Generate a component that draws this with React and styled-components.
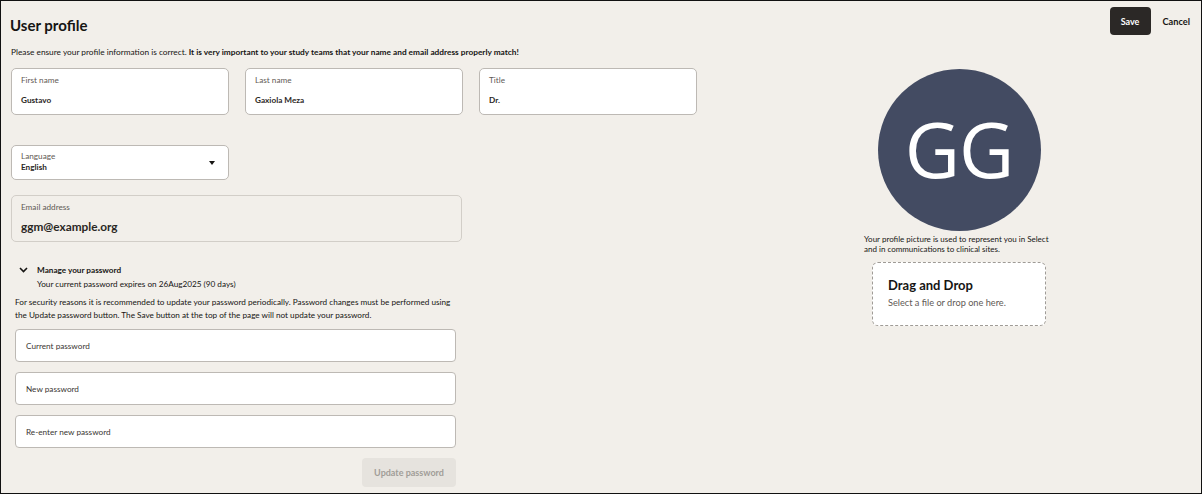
import React from "react";
import styled, { createGlobalStyle } from "styled-components";

const Global = createGlobalStyle`
  * { box-sizing: border-box; }
  html, body { margin: 0; padding: 0; background: #f2efea; }
  body { font-family: Lato, "Noto Sans", sans-serif; color: #161513; }
`;

const Frame = styled.div`
  width: 1202px;
  height: 494px;
  border: 1px solid #111;
  background: #f2efea;
  padding: 6px 11px 0 9px;
  overflow: hidden;
`;

const Header = styled.div`
  display: flex;
  justify-content: space-between;
  align-items: flex-start;
  height: 28px;
`;

const Title = styled.h1`
  margin: 8px 0 0 0;
  font-size: 15px;
  line-height: 20px;
  font-weight: 700;
`;

const Actions = styled.div`
  display: flex;
  align-items: center;
  gap: 12px;
`;

const SaveButton = styled.button`
  height: 28px;
  width: 41px;
  border: none;
  border-radius: 4px;
  background: #2b2826;
  color: #fff;
  font-family: Lato, sans-serif;
  font-weight: 700;
  font-size: 9px;
  padding: 0;
`;

const CancelButton = styled.button`
  border: none;
  background: transparent;
  color: #161513;
  font-family: Lato, sans-serif;
  font-weight: 700;
  font-size: 9.2px;
  padding: 0;
`;

const Notice = styled.p`
  margin: 11px 0 0 1px;
  font-size: 8.3px;
  line-height: 12px;
  b { font-weight: 700; }
`;

const Body = styled.div`
  display: flex;
  margin-top: 10px;
`;

const LeftCol = styled.div`
  width: 687px;
  padding-left: 1px;
  display: flex;
  flex-direction: column;
`;

const FieldRow = styled.div`
  display: grid;
  grid-template-columns: repeat(3, 218px);
  gap: 16px;
`;

const FieldBox = styled.div`
  height: ${(p) => p.$h || 47}px;
  width: ${(p) => (p.$w ? `${p.$w}px` : "auto")};
  border: 1px solid ${(p) => (p.$readonly ? "#d2cec8" : "#bdb9b4")};
  border-radius: 5px;
  background: ${(p) => (p.$readonly ? "transparent" : "#fff")};
  padding: ${(p) => p.$pt || 6}px 10px 0 9px;
  margin-top: ${(p) => p.$mt || 0}px;
  position: relative;
`;

const Label = styled.div`
  font-size: 8.2px;
  line-height: ${(p) => p.$lh || 10}px;
  color: #5f5a55;
`;

const Value = styled.div`
  font-size: ${(p) => p.$size || 8.2}px;
  line-height: ${(p) => p.$lh || 10}px;
  font-weight: 700;
  color: #2a2724;
  margin-top: ${(p) => p.$mt || 0}px;
`;

const Caret = styled.span`
  position: absolute;
  right: 13px;
  top: 15px;
  width: 0;
  height: 0;
  border-left: 3px solid transparent;
  border-right: 3px solid transparent;
  border-top: 4px solid #161513;
`;

const PasswordSection = styled.div`
  margin-top: 22px;
  padding-left: 4px;
  display: flex;
  flex-direction: column;
  width: 445px;
`;

const SectionHead = styled.div`
  display: flex;
  align-items: center;
  gap: 9px;
  padding-left: 4px;
  font-size: 8.2px;
  line-height: 12px;
  font-weight: 700;
`;

const Expiry = styled.div`
  padding-left: 22px;
  margin-top: 2px;
  font-size: 8.2px;
  line-height: 12px;
`;

const Para = styled.p`
  margin: 6px 0 0 0;
  width: 441px;
  font-size: 8.2px;
  line-height: 13px;
`;

const PwInput = styled.div`
  height: 33px;
  width: 441px;
  background: #fff;
  border: 1px solid #bdb9b4;
  border-radius: 4px;
  display: flex;
  align-items: center;
  padding-left: 10px;
  font-size: 8.2px;
  color: #3a3632;
  margin-top: ${(p) => p.$mt}px;
`;

const UpdateButton = styled.button`
  margin-top: 10px;
  align-self: flex-end;
  width: 94px;
  height: 29px;
  border: none;
  border-radius: 4px;
  background: #e6e3de;
  color: #a19d98;
  font-family: Lato, sans-serif;
  font-size: 9px;
  font-weight: 700;
`;

const RightCol = styled.div`
  flex: 1;
  padding-left: 31px;
  margin-top: 1px;
  display: flex;
  flex-direction: column;
  align-items: center;
`;

const Avatar = styled.div`
  width: 163px;
  height: 162px;
  border-radius: 50%;
  background: #434b62;
  color: #fff;
  display: flex;
  align-items: center;
  justify-content: center;
  font-family: "Open Sans", "Noto Sans", sans-serif;
  font-size: 76px;
  letter-spacing: -1px;
  padding-bottom: 4px;
`;

const AvatarNote = styled.p`
  margin: 3px 0 0 0;
  width: 200px;
  padding-left: 5px;
  font-size: 8px;
  line-height: 10px;
  color: #161513;
`;

const DropZone = styled.div`
  margin-top: 8px;
  width: 174px;
  height: 64px;
  background: #fff;
  border: 1px dashed #9f9b96;
  border-radius: 6px;
  padding: 14px 15px 0 15px;
`;

const DropTitle = styled.div`
  font-size: 13px;
  line-height: 17px;
  font-weight: 700;
`;

const DropSub = styled.div`
  margin-top: 3px;
  font-size: 9.2px;
  line-height: 11px;
  color: #5f5a55;
`;

const Chevron = () => (
  <svg width="9" height="6" viewBox="0 0 9 6">
    <path d="M1 1l3.5 3.5L8 1" fill="none" stroke="#161513" strokeWidth="1.6" />
  </svg>
);

export default function App() {
  return (
    <>
      <Global />
      <Frame>
        <Header>
          <Title>User profile</Title>
          <Actions>
            <SaveButton>Save</SaveButton>
            <CancelButton>Cancel</CancelButton>
          </Actions>
        </Header>
        <Notice>
          Please ensure your profile information is correct.{" "}
          <b>It is very important to your study teams that your name and email address properly match!</b>
        </Notice>
        <Body>
          <LeftCol>
            <FieldRow>
              <FieldBox>
                <Label>First name</Label>
                <Value $mt={10}>Gustavo</Value>
              </FieldBox>
              <FieldBox>
                <Label>Last name</Label>
                <Value $mt={10}>Gaxiola Meza</Value>
              </FieldBox>
              <FieldBox>
                <Label>Title</Label>
                <Value $mt={10}>Dr.</Value>
              </FieldBox>
            </FieldRow>
            <FieldBox $w={218} $h={35} $mt={30} $pt={5}>
              <Label $lh={11}>Language</Label>
              <Value $lh={11}>English</Value>
              <Caret />
            </FieldBox>
            <FieldBox $w={451} $mt={15} $readonly>
              <Label>Email address</Label>
              <Value $size={11.8} $lh={14} $mt={8}>ggm@example.org</Value>
            </FieldBox>
            <PasswordSection>
              <SectionHead>
                <Chevron />
                Manage your password
              </SectionHead>
              <Expiry>Your current password expires on 26Aug2025 (90 days)</Expiry>
              <Para>
                For security reasons it is recommended to update your password periodically. Password changes must be performed using
                <br />
                the Update password button. The Save button at the top of the page will not update your password.
              </Para>
              <PwInput $mt={7}>Current password</PwInput>
              <PwInput $mt={10}>New password</PwInput>
              <PwInput $mt={10}>Re-enter new password</PwInput>
              <UpdateButton disabled>Update password</UpdateButton>
            </PasswordSection>
          </LeftCol>
          <RightCol>
            <Avatar>GG</Avatar>
            <AvatarNote>
              Your profile picture is used to represent you in Select
              <br />
              and in communications to clinical sites.
            </AvatarNote>
            <DropZone>
              <DropTitle>Drag and Drop</DropTitle>
              <DropSub>Select a file or drop one here.</DropSub>
            </DropZone>
          </RightCol>
        </Body>
      </Frame>
    </>
  );
}
